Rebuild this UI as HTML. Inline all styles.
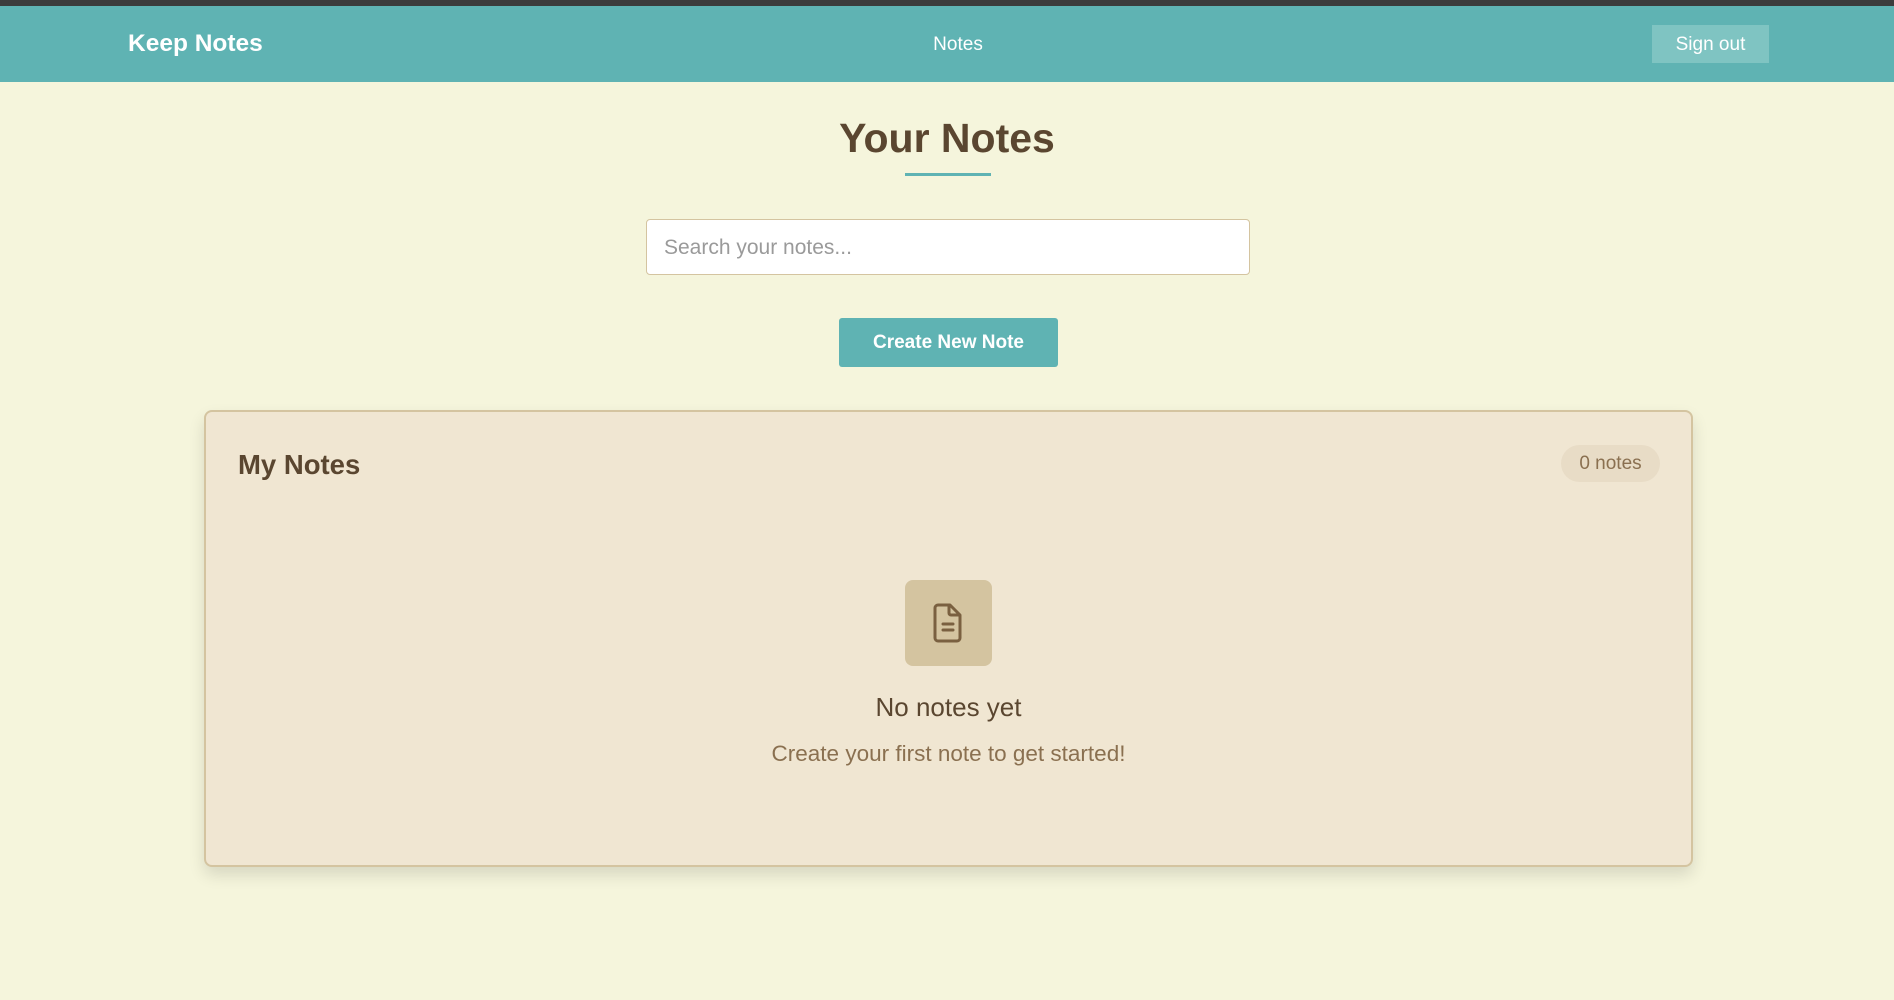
<!DOCTYPE html>
<html><head><style>
*{box-sizing:border-box;margin:0;padding:0}
body{width:1894px;height:1000px;background:#f5f5dc;font-family:"Liberation Sans",sans-serif;position:relative;overflow:hidden;color:#5a4630}
.top{position:absolute;left:0;top:0;width:1894px;height:6px;background:#3c3c3c}
.hdr{position:absolute;left:0;top:6px;width:1894px;height:76px;background:#5fb3b3}
.logo{position:absolute;left:128px;top:24px;font-size:24.5px;font-weight:bold;color:#fff}
.nav{position:absolute;left:958px;transform:translateX(-50%);top:28px;font-size:19px;color:#fff}
.so{position:absolute;left:1652px;top:19px;width:117px;height:38px;background:#7fc4c2;color:#fff;font-size:19px;text-align:center;line-height:40px}
h1{position:absolute;left:0;width:1894px;top:115px;text-align:center;font-size:41px;font-weight:bold;color:#5a4630}
.ul{position:absolute;left:905px;top:173px;width:86px;height:3px;background:#5fb3b3}
.search{position:absolute;left:646px;top:219px;width:604px;height:56px;background:#fff;border:1px solid #d4c4a0;border-radius:4px;font-size:21px;color:#9a9a9a;padding:16px 17px}
.btn{position:absolute;left:839px;top:318px;width:219px;height:49px;background:#5fb3b3;border-radius:3px;color:#fff;font-weight:bold;font-size:19px;text-align:center;line-height:49px}
.card{position:absolute;left:204px;top:410px;width:1489px;height:457px;background:#f0e6d2;border:2px solid #d4c4a0;border-radius:8px;box-shadow:0 8px 16px rgba(0,0,0,0.12)}
.ct{position:absolute;left:32px;top:37px;font-size:27.5px;font-weight:bold}
.badge{position:absolute;left:1355px;top:33px;width:99px;height:37px;border-radius:19px;background:#e8dcc6;color:#8a7050;font-size:19px;text-align:center;line-height:37px}
.ib{position:absolute;left:699px;top:168px;width:87px;height:86px;background:#d4c4a0;border-radius:8px}
.nn{position:absolute;left:0;width:1485px;top:280px;text-align:center;font-size:26px;color:#5a4630}
.sub{position:absolute;left:0;width:1485px;top:329px;text-align:center;font-size:22.5px;color:#8a7050}
</style></head><body>
<div class="top"></div>
<div class="hdr"><div class="logo">Keep Notes</div><div class="nav">Notes</div><div class="so">Sign out</div></div>
<h1>Your Notes</h1>
<div class="ul"></div>
<div class="search">Search your notes...</div>
<div class="btn">Create New Note</div>
<div class="card">
<div class="ct">My Notes</div>
<div class="badge">0 notes</div>
<div class="ib"><svg width="87" height="86" viewBox="0 0 87 86"><path d="M33 25h12l10 10v23a3 3 0 0 1-3 3H33a3 3 0 0 1-3-3V28a3 3 0 0 1 3-3z" fill="none" stroke="#7a6040" stroke-width="3" stroke-linejoin="round"/><path d="M44 25v8a2 2 0 0 0 2 2h9" fill="none" stroke="#7a6040" stroke-width="3" stroke-linejoin="round"/><path d="M38 44h10M38 50h10" stroke="#7a6040" stroke-width="3" stroke-linecap="round"/></svg></div>
<div class="nn">No notes yet</div>
<div class="sub">Create your first note to get started!</div>
</div>
</body></html>
